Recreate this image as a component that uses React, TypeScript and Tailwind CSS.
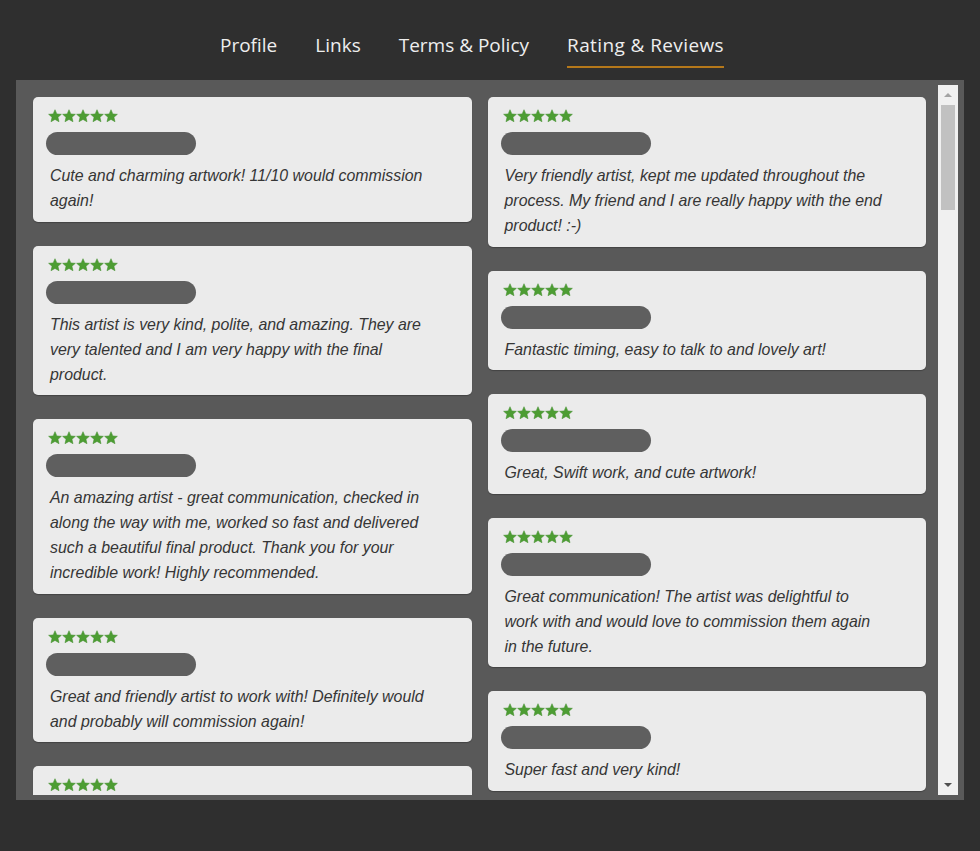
import React from "react";

type Review = { lines: string[] };

const left: Review[] = [
  { lines: ["Cute and charming artwork! 11/10 would commission", "again!"] },
  {
    lines: [
      "This artist is very kind, polite, and amazing. They are",
      "very talented and I am very happy with the final",
      "product.",
    ],
  },
  {
    lines: [
      "An amazing artist - great communication, checked in",
      "along the way with me, worked so fast and delivered",
      "such a beautiful final product. Thank you for your",
      "incredible work! Highly recommended.",
    ],
  },
  {
    lines: [
      "Great and friendly artist to work with! Definitely would",
      "and probably will commission again!",
    ],
  },
  { lines: ["Amazing work, would recommend!"] },
];

const right: Review[] = [
  {
    lines: [
      "Very friendly artist, kept me updated throughout the",
      "process. My friend and I are really happy with the end",
      "product! :-)",
    ],
  },
  { lines: ["Fantastic timing, easy to talk to and lovely art!"] },
  { lines: ["Great, Swift work, and cute artwork!"] },
  {
    lines: [
      "Great communication! The artist was delightful to",
      "work with and would love to commission them again",
      "in the future.",
    ],
  },
  { lines: ["Super fast and very kind!"] },
  { lines: ["Lovely artist, highly recommend!"] },
];

function Star() {
  return (
    <svg width="14" height="14" viewBox="0 0 24 24" className="block">
      <path
        d="M12 1.2l3.2 7.2 7.8.7-5.9 5.1 1.8 7.7L12 17.9l-6.9 4 1.8-7.7-5.9-5.1 7.8-.7z"
        fill="#4d9d33"
        stroke="#3d8a27"
        strokeWidth="0.8"
      />
    </svg>
  );
}

function Card({ r }: { r: Review }) {
  return (
    <div className="bg-[#ebebeb] rounded-[5px] pt-[12px] pb-[8.5px] px-[13px] shadow-[0_1px_1px_rgba(0,0,0,0.25)]">
      <div className="flex pl-[2px] h-[14px]">
        <Star />
        <Star />
        <Star />
        <Star />
        <Star />
      </div>
      <div className="mt-[9px] h-[23px] w-[150px] rounded-full bg-[#5f5f5f]" />
      <div
        className="mt-[8px] pl-[4px] text-[15.9px] leading-[25px] italic text-[#363636]"
        style={{ fontFamily: '"Liberation Sans", Arial, sans-serif' }}
      >
        {r.lines.map((l, i) => (
          <div key={i} className="whitespace-nowrap">
            {l}
          </div>
        ))}
      </div>
    </div>
  );
}

export default function App() {
  const tabs = ["Profile", "Links", "Terms & Policy", "Rating & Reviews"];
  return (
    <div className="w-[980px] h-[851px] bg-[#2f2f2f] overflow-hidden">
      <div
        className="h-[80px] flex items-start pl-[217px] gap-[32px] text-[19px] text-[#eeeeee]"
        style={{ fontFamily: '"Open Sans", "Noto Sans", sans-serif' }}
      >
        {tabs.map((t, i) => (
          <div key={t} className="flex flex-col px-[3px]">
            <div className="pt-[31px] leading-[28px] h-[59px] flex items-start">
              <span className={i === 3 ? "tracking-[0.4px]" : ""}>{t}</span>
            </div>
            <div
              className={
                i === 3
                  ? "h-[2px] bg-[#b5781a] mt-[7px]"
                  : "h-[2px] bg-transparent mt-[7px]"
              }
            />
          </div>
        ))}
      </div>
      <div className="ml-[16px] w-[948px] h-[720px] bg-[#595959] pl-[5px] pr-[6px] py-[5px] flex">
        <div className="flex-1 h-[710px] overflow-hidden p-[12px]">
          <div className="grid grid-cols-2 gap-x-4 items-start">
            <div className="flex flex-col gap-6">
              {left.map((r, i) => (
                <Card key={i} r={r} />
              ))}
            </div>
            <div className="flex flex-col gap-6">
              {right.map((r, i) => (
                <Card key={i} r={r} />
              ))}
            </div>
          </div>
        </div>
        <div className="w-[20px] h-[710px] bg-[#f0f0f0] flex flex-col items-center">
          <div className="h-[20px] flex items-center justify-center">
            <div className="w-0 h-0 border-l-[4px] border-r-[4px] border-b-[4px] border-l-transparent border-r-transparent border-b-[#a3a3a3]" />
          </div>
          <div className="w-[14px] h-[105px] bg-[#c1c1c1]" />
          <div className="flex-1" />
          <div className="h-[20px] flex items-center justify-center">
            <div className="w-0 h-0 border-l-[4px] border-r-[4px] border-t-[4px] border-l-transparent border-r-transparent border-t-[#505050]" />
          </div>
        </div>
      </div>
    </div>
  );
}
